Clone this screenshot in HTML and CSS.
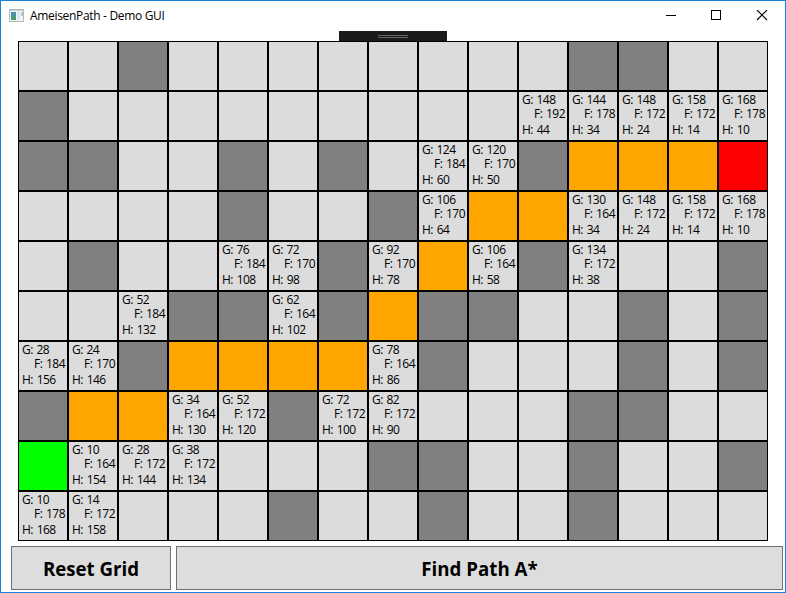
FILE: index.html
```html
<!DOCTYPE html>
<html lang="en">
<head>
<meta charset="utf-8">
<title>AmeisenPath - Demo GUI</title>
<link rel="stylesheet" href="styles.css">
</head>
<body>
<div class="window">
  <header class="titlebar">
    <svg class="app-icon" width="16" height="14" viewBox="0 0 16 14">
      <rect x="0.5" y="0.5" width="14" height="12" fill="#f4f5f6" stroke="#b4b8bb"/>
      <rect x="1" y="1" width="13" height="1" fill="#c9ccce"/>
      <rect x="2" y="3" width="5" height="8" fill="#4c8fa6"/>
      <rect x="2" y="7" width="5" height="4" fill="#4b9a74"/>
      <rect x="8" y="3" width="3" height="8" fill="#dfe4ee"/>
      <rect x="12" y="3" width="2" height="4" fill="#a8cfc4"/>
    </svg>
    <span class="title">AmeisenPath - Demo GUI</span>
    <svg class="controls" width="102" height="12" viewBox="0 0 102 12">
      <path d="M0 5.5H10" stroke="#000"/>
      <rect x="45.5" y="0.5" width="9" height="9" fill="none" stroke="#000"/>
      <path d="M91 0L101 10M101 0L91 10" stroke="#000" stroke-width="1.1"/>
    </svg>
  </header>
  <div class="debug-tab"><span class="grip"></span></div>
  <main class="grid" id="grid"></main>
  <footer class="actions">
    <button class="button reset">Reset Grid</button>
    <button class="button find">Find Path A*</button>
  </footer>
</div>
<script src="grid.js"></script>
</body>
</html>
```
FILE: styles.css
```css
* { box-sizing: border-box; }
body {
  margin: 0;
  font-family: "Open Sans", "Noto Sans", sans-serif;
  color: #000;
}
.window {
  width: 786px;
  height: 593px;
  border: 1px solid #1883d7;
  background: #fff;
  overflow: hidden;
}
.titlebar {
  display: flex;
  align-items: center;
  height: 30px;
  padding: 0 17px 0 8px;
}
.title {
  margin-left: 5px;
  font-size: 12px;
  line-height: 16px;
  letter-spacing: -0.32px;
}
.controls { margin-left: auto; }
.debug-tab {
  display: flex;
  justify-content: center;
  width: 108px;
  height: 10px;
  margin-left: 338px;
  padding-top: 4px;
  background: #1b1b1b;
}
.grip {
  width: 30px;
  height: 3px;
  border: solid #646464;
  border-width: 1px 0;
}
.grid {
  display: grid;
  grid-template-columns: repeat(15, 50px);
  grid-auto-rows: 50px;
  margin-left: 17px;
}
.cell {
  display: flex;
  flex-direction: column;
  border: 1px solid #000;
  padding: 1px 2px 0 3px;
  background: #dcdcdc;
  font-size: 12px;
  line-height: 14px;
  letter-spacing: -0.55px;
  word-spacing: 1.2px;
  white-space: nowrap;
}
.wall { background: #808080; }
.path { background: #ffa500; }
.start { background: #0f0; }
.goal { background: #f00; }
.f { margin-bottom: 2px; padding-left: 12px; }
.actions {
  display: flex;
  gap: 5px;
  margin: 5px 2px 0 10px;
}
.button {
  height: 44px;
  padding: 2px 0 0;
  border: 1px solid #707070;
  background: #ddd;
  font: bold 18.7px/26px "Open Sans", "Noto Sans", sans-serif;
  color: #000;
}
.reset { width: 160px; }
.find { flex: 1; }
```
FILE: grid.js
```js
// "." open, "#" wall, "o" path, "S" start, "E" goal, "G/F/H" visited node costs
const rows = [
  ". . # . . . . . . . . # # . .",
  "# . . . . . . . . . 148/192/44 144/178/34 148/172/24 158/172/14 168/178/10",
  "# # . . # . # . 124/184/60 120/170/50 # o o o E",
  ". . . . # . . # 106/170/64 o o 130/164/34 148/172/24 158/172/14 168/178/10",
  ". # . . 76/184/108 72/170/98 # 92/170/78 o 106/164/58 # 134/172/38 . . #",
  ". . 52/184/132 # # 62/164/102 # o # # . . # . #",
  "28/184/156 24/170/146 # o o o o 78/164/86 # . . . # . #",
  "# o o 34/164/130 52/172/120 # 72/172/100 82/172/90 . . . # # . .",
  "S 10/164/154 28/172/144 38/172/134 . . . # # . . # . . #",
  "10/178/168 14/172/158 . . . # . . # . . # . . ."
];
const kinds = { "#": "wall", o: "path", S: "start", E: "goal" };
const grid = document.getElementById("grid");
rows.forEach(row => row.split(" ").forEach(token => {
  const cell = document.createElement("div");
  cell.className = "cell " + (kinds[token] || "");
  if (token.includes("/")) {
    const [g, f, h] = token.split("/");
    cell.innerHTML = `<span>G: ${g}</span><span class="f">F: ${f}</span><span>H: ${h}</span>`;
  }
  grid.appendChild(cell);
}));
```
